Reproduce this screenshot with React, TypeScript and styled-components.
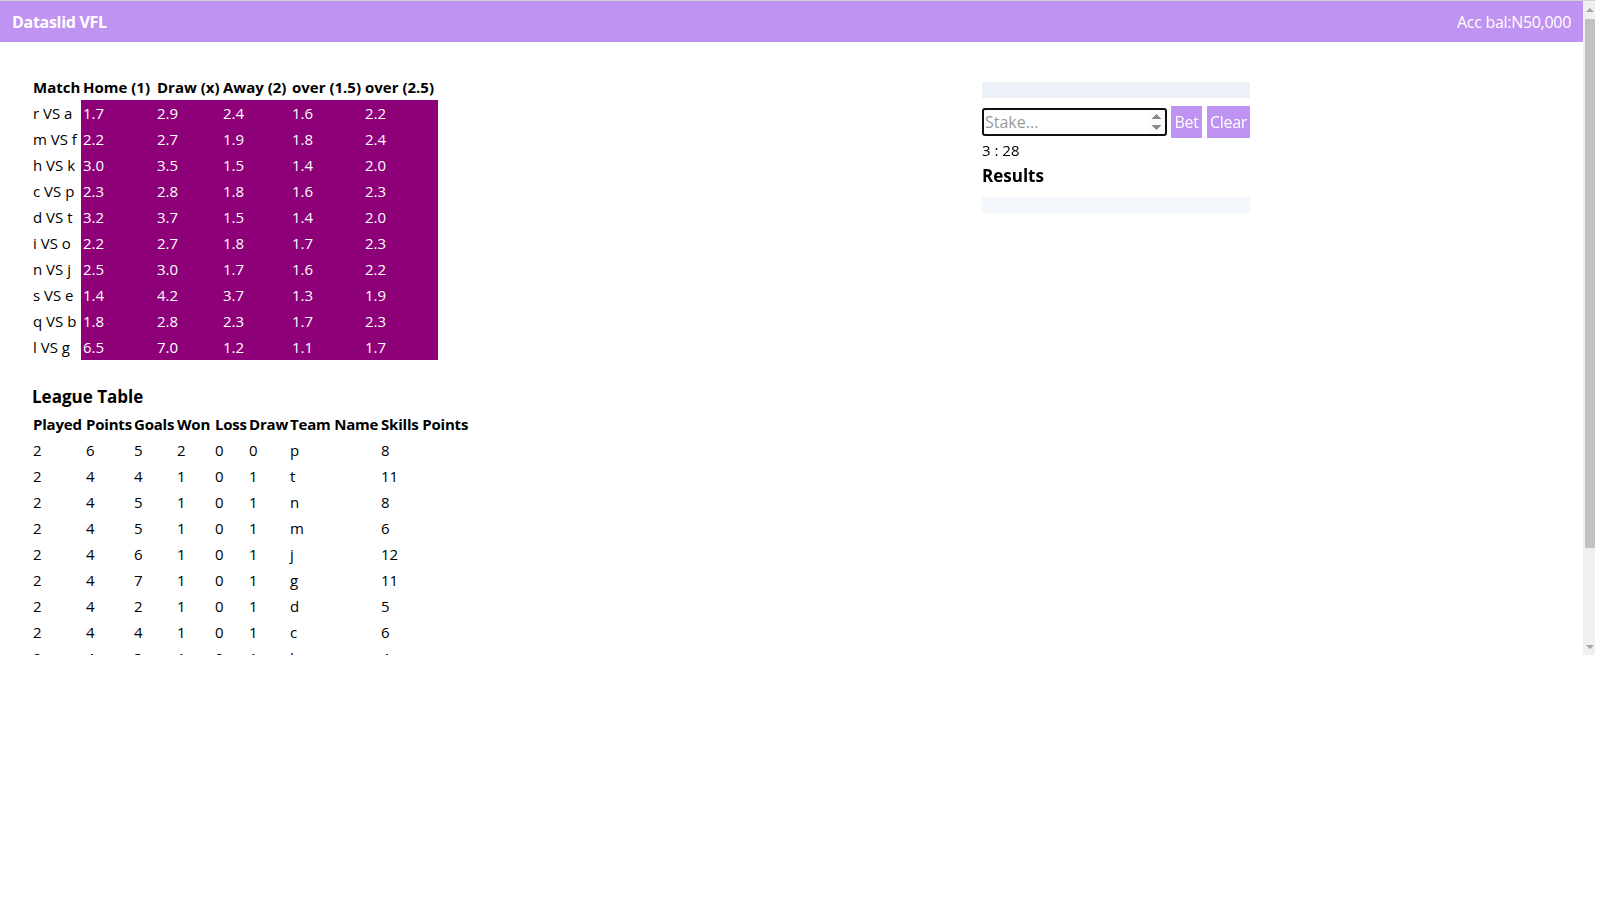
import { createGlobalStyle, styled } from 'styled-components'

const GlobalStyle = createGlobalStyle`
  html, body {
    margin: 0;
    padding: 0;
    background: #ffffff;
  }
  body {
    font-family: "Open Sans", "Noto Sans", sans-serif;
    font-size: 15px;
    color: #000000;
  }
`

const LAVENDER = '#bf93f1'

const Frame = styled.div`
  width: 1595px;
  height: 654px;
  border-top: 1px solid #d2d2d2;
  display: flex;
`

const Viewport = styled.div`
  width: 1583px;
  height: 100%;
  overflow: hidden;
`

const ScrollRail = styled.div`
  width: 12px;
  height: 100%;
  background: #f0f0f0;
  display: flex;
  flex-direction: column;
`

const RailButton = styled.div<{ $down?: boolean }>`
  height: 17px;
  display: flex;
  align-items: center;
  justify-content: center;
  padding-left: 2px;

  &::before {
    content: '';
    width: 0;
    height: 0;
    border-left: 4px solid transparent;
    border-right: 4px solid transparent;
    ${p =>
      p.$down ? 'border-top: 4px solid #a3a3a3;' : 'border-bottom: 4px solid #a3a3a3;'}
  }
`

const RailThumb = styled.div`
  height: 529px;
  margin: 1px 0 0 2px;
  background: #c1c1c1;
`

const RailSpacer = styled.div`
  flex: 1;
`

const TopBar = styled.header`
  height: 41px;
  background: ${LAVENDER};
  color: #ffffff;
  display: flex;
  align-items: center;
  justify-content: space-between;
  padding: 0 12px;
  font-size: 16px;
`

const Brand = styled.span`
  font-weight: 700;
  letter-spacing: -0.3px;
`

const Balance = styled.span`
  letter-spacing: -0.3px;
`

const Main = styled.main`
  display: grid;
  grid-template-columns: 951px 268px;
  padding: 0 0 15px 31px;
`

const LeftColumn = styled.section`
  padding-top: 32px;
`

const RightColumn = styled.aside`
  padding-top: 40px;
  display: flex;
  flex-direction: column;
`

const Table = styled.table<{ $w: number }>`
  width: ${p => p.$w}px;
  border-collapse: collapse;
  table-layout: fixed;
  font-size: 15px;
`

const HeadCell = styled.th<{ $w: number; $tight?: boolean }>`
  width: ${p => p.$w}px;
  padding: 3px 0 3px 2px;
  line-height: 20px;
  text-align: left;
  font-weight: 700;
  white-space: nowrap;
  letter-spacing: ${p => (p.$tight ? '-0.2px' : '0')};
  box-sizing: border-box;
`

const Cell = styled.td<{ $odd?: boolean }>`
  padding: 3px 0 3px 2px;
  line-height: 20px;
  white-space: nowrap;
  background: ${p => (p.$odd ? '#8e0078' : 'transparent')};
  color: ${p => (p.$odd ? '#ffffff' : '#000000')};
`

const SectionTitle = styled.h3`
  margin: 25px 0 2px 1px;
  font-size: 17px;
  line-height: 24px;
  font-weight: 700;
`

const Strip = styled.div<{ $tone: string; $gap: number }>`
  height: 16px;
  margin-top: ${p => p.$gap}px;
  background: ${p => p.$tone};
`

const StakeRow = styled.div`
  display: flex;
  align-items: center;
  height: 32px;
  margin-top: 8px;
`

const StakeInput = styled.input`
  box-sizing: border-box;
  width: 185px;
  height: 28px;
  border: 2px solid #101010;
  border-radius: 3px;
  padding: 0 1px;
  font-family: inherit;
  font-size: 16px;
  outline: none;

  &::placeholder {
    color: #9a9a9a;
  }
  &::-webkit-inner-spin-button {
    opacity: 1;
  }
`

const ActionButton = styled.button<{ $w: number; $gap: number }>`
  width: ${p => p.$w}px;
  height: 32px;
  margin-left: ${p => p.$gap}px;
  padding: 0;
  border: none;
  background: ${LAVENDER};
  color: #ffffff;
  font-family: inherit;
  font-size: 16px;
  letter-spacing: -0.3px;
  cursor: pointer;
`

const Timer = styled.div`
  margin-top: 2px;
  line-height: 20px;
  font-size: 15px;
`

const ResultsTitle = styled.h3`
  margin: 4px 0 0;
  font-size: 17px;
  line-height: 24px;
  font-weight: 700;
`

const oddsHead: [string, number][] = [
  ['Match', 50],
  ['Home (1)', 74],
  ['Draw (x)', 66],
  ['Away (2)', 69],
  ['over (1.5)', 73],
  ['over (2.5)', 75],
]

const odds = [
  ['r VS a', '1.7', '2.9', '2.4', '1.6', '2.2'],
  ['m VS f', '2.2', '2.7', '1.9', '1.8', '2.4'],
  ['h VS k', '3.0', '3.5', '1.5', '1.4', '2.0'],
  ['c VS p', '2.3', '2.8', '1.8', '1.6', '2.3'],
  ['d VS t', '3.2', '3.7', '1.5', '1.4', '2.0'],
  ['i VS o', '2.2', '2.7', '1.8', '1.7', '2.3'],
  ['n VS j', '2.5', '3.0', '1.7', '1.6', '2.2'],
  ['s VS e', '1.4', '4.2', '3.7', '1.3', '1.9'],
  ['q VS b', '1.8', '2.8', '2.3', '1.7', '2.3'],
  ['l VS g', '6.5', '7.0', '1.2', '1.1', '1.7'],
]

const leagueHead: [string, number][] = [
  ['Played', 53],
  ['Points', 48],
  ['Goals', 43],
  ['Won', 38],
  ['Loss', 34],
  ['Draw', 41],
  ['Team Name', 91],
  ['Skills Points', 93],
]

const league = [
  ['2', '6', '5', '2', '0', '0', 'p', '8'],
  ['2', '4', '4', '1', '0', '1', 't', '11'],
  ['2', '4', '5', '1', '0', '1', 'n', '8'],
  ['2', '4', '5', '1', '0', '1', 'm', '6'],
  ['2', '4', '6', '1', '0', '1', 'j', '12'],
  ['2', '4', '7', '1', '0', '1', 'g', '11'],
  ['2', '4', '2', '1', '0', '1', 'd', '5'],
  ['2', '4', '4', '1', '0', '1', 'c', '6'],
  ['2', '4', '3', '1', '0', '1', 'k', '4'],
  ['2', '3', '3', '1', '1', '0', 'r', '7'],
  ['2', '3', '2', '1', '1', '0', 'a', '9'],
  ['2', '3', '4', '1', '1', '0', 'f', '10'],
]

const sum = (cols: [string, number][]) => cols.reduce((t, [, w]) => t + w, 0)

export default function App() {
  return (
    <>
      <GlobalStyle />
      <Frame>
        <Viewport>
          <TopBar>
            <Brand>Dataslid VFL</Brand>
            <Balance>Acc bal:N50,000</Balance>
          </TopBar>
          <Main>
            <LeftColumn>
              <Table $w={sum(oddsHead)}>
                <thead>
                  <tr>
                    {oddsHead.map(([label, w]) => (
                      <HeadCell key={label} $w={w}>
                        {label}
                      </HeadCell>
                    ))}
                  </tr>
                </thead>
                <tbody>
                  {odds.map(row => (
                    <tr key={row[0]}>
                      {row.map((v, i) => (
                        <Cell key={i} $odd={i > 0}>
                          {v}
                        </Cell>
                      ))}
                    </tr>
                  ))}
                </tbody>
              </Table>

              <SectionTitle>League Table</SectionTitle>
              <Table $w={sum(leagueHead)}>
                <thead>
                  <tr>
                    {leagueHead.map(([label, w]) => (
                      <HeadCell key={label + w} $w={w} $tight>
                        {label}
                      </HeadCell>
                    ))}
                  </tr>
                </thead>
                <tbody>
                  {league.map(row => (
                    <tr key={row[6]}>
                      {row.map((v, i) => (
                        <Cell key={i}>{v}</Cell>
                      ))}
                    </tr>
                  ))}
                </tbody>
              </Table>
            </LeftColumn>

            <RightColumn>
              <Strip $tone="#edf1f8" $gap={0} />
              <StakeRow>
                <StakeInput type="number" placeholder="Stake..." autoFocus />
                <ActionButton $w={31} $gap={4}>
                  Bet
                </ActionButton>
                <ActionButton $w={43} $gap={5}>
                  Clear
                </ActionButton>
              </StakeRow>
              <Timer>3 : 28</Timer>
              <ResultsTitle>Results</ResultsTitle>
              <Strip $tone="#f4f7fb" $gap={9} />
            </RightColumn>
          </Main>
        </Viewport>
        <ScrollRail>
          <RailButton />
          <RailThumb />
          <RailSpacer />
          <RailButton $down />
        </ScrollRail>
      </Frame>
    </>
  )
}
